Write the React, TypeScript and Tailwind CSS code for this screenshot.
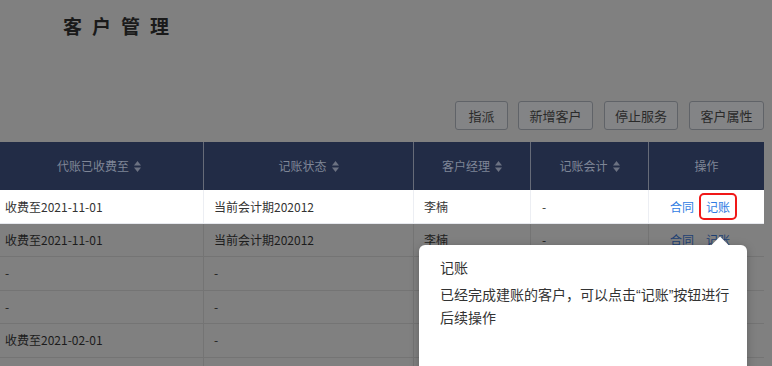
import React from 'react'

const cols = 'grid grid-cols-[208px_210px_117px_118px_116px]'

function SortIcon() {
  return (
    <svg width="7" height="11" viewBox="0 0 7 11" className="ml-[5px]">
      <polygon points="0,4.5 3.5,0 7,4.5" fill="#6c7282" />
      <polygon points="0,6.5 3.5,11 7,6.5" fill="#6c7282" />
    </svg>
  )
}

interface Row {
  fee: string
  status: string
}

const rows: Row[] = [
  { fee: '-', status: '-' },
  { fee: '-', status: '-' },
  { fee: '收费至2021-02-01', status: '-' },
  { fee: '', status: '' },
]

export default function App() {
  const headers = [
    { label: '代账已收费至', sort: true },
    { label: '记账状态', sort: true },
    { label: '客户经理', sort: true },
    { label: '记账会计', sort: true },
    { label: '操作', sort: false },
  ]

  const buttons = [
    { t: '指派', c: 'w-[53px]' },
    { t: '新增客户', c: 'w-[75px] ml-[10px]' },
    { t: '停止服务', c: 'w-[74px] ml-[11px]' },
    { t: '客户属性', c: 'w-[75px] ml-[11px]' },
  ]

  return (
    <div className="relative w-[772px] h-[366px] overflow-hidden bg-[#808080] font-['Noto_Sans_CJK_SC',sans-serif]">
      <div className="pl-[63px] pt-[14px] h-[38px]">
        <h1 className="text-[19px] leading-[24px] font-bold tracking-[10px] text-[#1a1a1a]">
          客户管理
        </h1>
      </div>

      <div className="flex justify-end pr-[8px] mt-[63px]">
        {buttons.map((b) => (
          <button
            key={b.t}
            className={`${b.c} h-[29px] rounded-[3px] border border-[#606368] bg-[#838486] text-[13px] text-[#2a2a2a]`}
          >
            {b.t}
          </button>
        ))}
      </div>

      <div className="-ml-[5px] w-[769px] mt-[12px] text-[12px]">
        <div className={`${cols} h-[48px] bg-[#222c46] text-[#7f8697]`}>
          {headers.map((h, i) => (
            <div
              key={h.label}
              className={`flex items-center justify-center ${i > 0 ? 'border-l border-[#666b78]' : ''}`}
            >
              <span>{h.label}</span>
              {h.sort && <SortIcon />}
            </div>
          ))}
        </div>

        {/* highlighted row */}
        <div className={`${cols} h-[34px] bg-white text-[#333] border-b border-[#e6e8ee]`}>
          <div className="flex items-center pl-[10px]">收费至2021-11-01</div>
          <div className="flex items-center pl-[10px] border-l border-[#eceef3]">当前会计期202012</div>
          <div className="flex items-center pl-[10px] border-l border-[#eceef3]">李楠</div>
          <div className="flex items-center pl-[11px] border-l border-[#eceef3]">-</div>
          <div className="flex items-center pl-[21px] border-l border-[#eceef3]">
            <span className="text-[#2f7be3]">合同</span>
            <span className="ml-[5px] inline-flex items-center h-[27px] px-[5px] border-2 border-[#f01818] rounded-[5px] text-[#2f7be3]">
              记账
            </span>
          </div>
        </div>

        <div className={`${cols} h-[33px] text-[#1c1c1c] border-b border-[#747474]`}>
          <div className="flex items-center pl-[10px]">收费至2021-11-01</div>
          <div className="flex items-center pl-[10px] border-l border-[#747474]">当前会计期202012</div>
          <div className="flex items-center pl-[10px] border-l border-[#747474]">李楠</div>
          <div className="flex items-center pl-[11px] border-l border-[#747474]">-</div>
          <div className="flex items-center pl-[21px] border-l border-[#747474] text-[#1d3f73]">
            <span>合同</span>
            <span className="ml-[12px]">记账</span>
          </div>
        </div>

        {rows.map((r, i) => (
          <div key={i} className={`${cols} h-[33.5px] text-[#1c1c1c] border-b border-[#747474]`}>
            <div className="flex items-center pl-[10px]">{r.fee}</div>
            <div className="flex items-center pl-[10px] border-l border-[#747474]">{r.status}</div>
            <div className="border-l border-[#747474]" />
            <div className="border-l border-[#747474]" />
            <div className="border-l border-[#747474]" />
          </div>
        ))}
      </div>

      {/* guide popover */}
      <div className="absolute left-[419px] top-[245px] w-[328px] h-[150px] rounded-[6px] bg-white shadow-[0_2px_10px_rgba(0,0,0,0.25)] pl-[21px] pr-[8px] pt-[11px] text-[14px] leading-[22px] text-[#333]">
        <div className="absolute -top-[6px] left-[295px] w-[12px] h-[12px] rotate-45 bg-white" />
        <div className="relative">记账</div>
        <p className="relative mt-[5px] whitespace-nowrap">
          已经完成建账的客户，可以点击<span className="font-['Liberation_Sans',sans-serif]">“</span>记账<span className="font-['Liberation_Sans',sans-serif]">”</span>按钮进行
          <br />
          后续操作
        </p>
      </div>
    </div>
  )
}
